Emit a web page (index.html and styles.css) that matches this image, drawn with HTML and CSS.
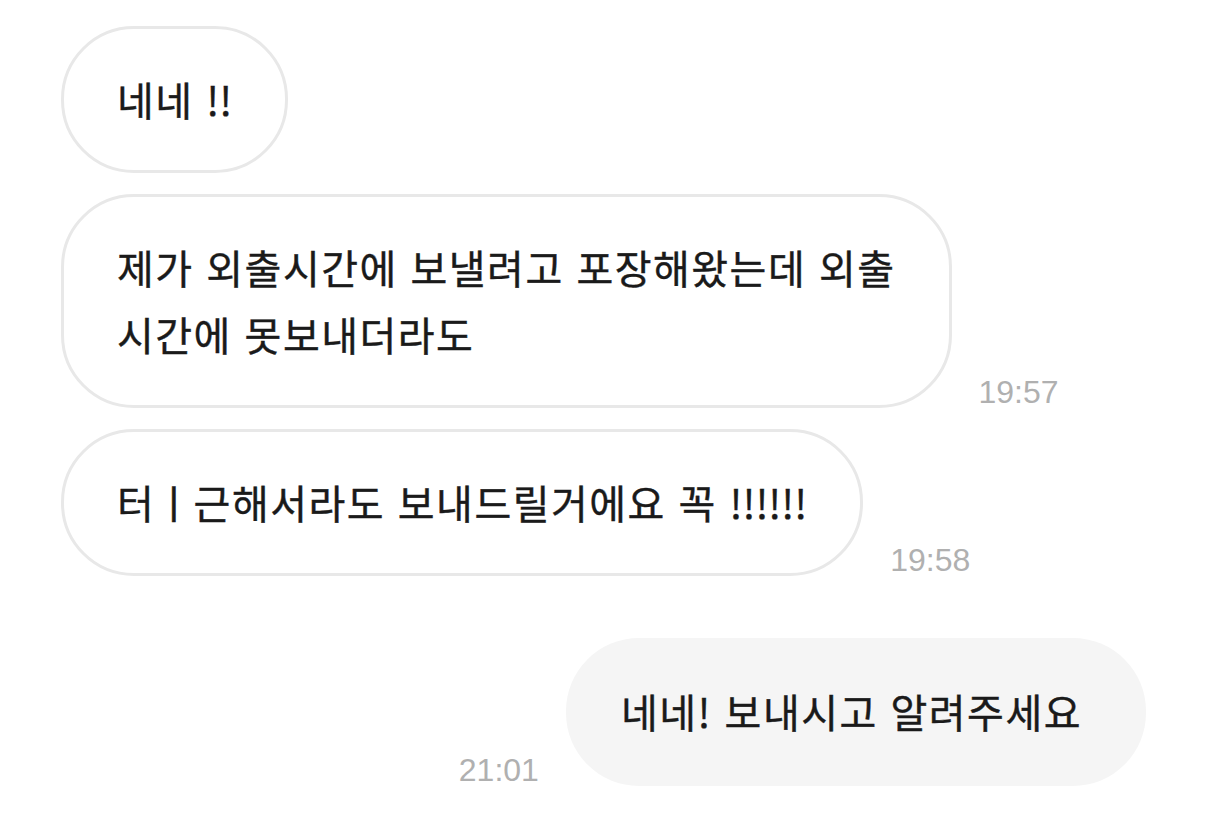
FILE: index.html
```html
<!DOCTYPE html>
<html lang="ko">
<head>
  <meta charset="UTF-8" />
  <meta name="viewport" content="width=device-width, initial-scale=1" />
  <title>대화</title>
  <link rel="stylesheet" href="styles.css">
</head>
<body>
  <div class="chat">
    <div class="row">
      <div class="bubble">네네 <span class="bang">!!</span></div>
    </div>
    <div class="row">
      <div class="bubble">제가 외출시간에 보낼려고 포장해왔는데 외출<br>시간에 못보내더라도</div>
      <span class="time">19:57</span>
    </div>
    <div class="row">
      <div class="bubble">터ㅣ근해서라도 보내드릴거에요 꼭 <span class="bang">!!!!!!</span></div>
      <span class="time">19:58</span>
    </div>
    <div class="row sent">
      <span class="time">21:01</span>
      <div class="bubble">네네! 보내시고 알려주세요</div>
    </div>
  </div>
</body>
</html>
```

FILE: styles.css
```css
* { box-sizing: border-box; }
body {
  margin: 0;
  padding: 0;
  background-color: #fff;
  font-family: "Noto Sans CJK KR", "Noto Sans", sans-serif;
  color: #1a1a1a;
}
.chat {
  display: flex;
  flex-direction: column;
  gap: 21px;
  padding: 26px 60px 0 61px;
}
.row {
  display: flex;
  align-items: flex-end;
  gap: 27px;
}
.row.sent {
  justify-content: flex-end;
  margin-top: 41px;
}
.bubble {
  font-size: 40px;
  letter-spacing: 1.5px;
  line-height: 67px;
  padding: 37px 53px;
  border: 3px solid #e8e8e8;
  border-radius: 73px;
  background-color: #fff;
  white-space: nowrap;
  -webkit-text-stroke: 0.4px #1a1a1a;
}
.bubble .bang {
  letter-spacing: 0;
}
.sent .bubble {
  border: none;
  padding: 40px 64px 41px 55px;
  background-color: #f5f5f5;
}
.time {
  font-family: "Liberation Sans", Arial, sans-serif;
  font-size: 32px;
  line-height: 1;
  color: #b0b0b0;
}
```
